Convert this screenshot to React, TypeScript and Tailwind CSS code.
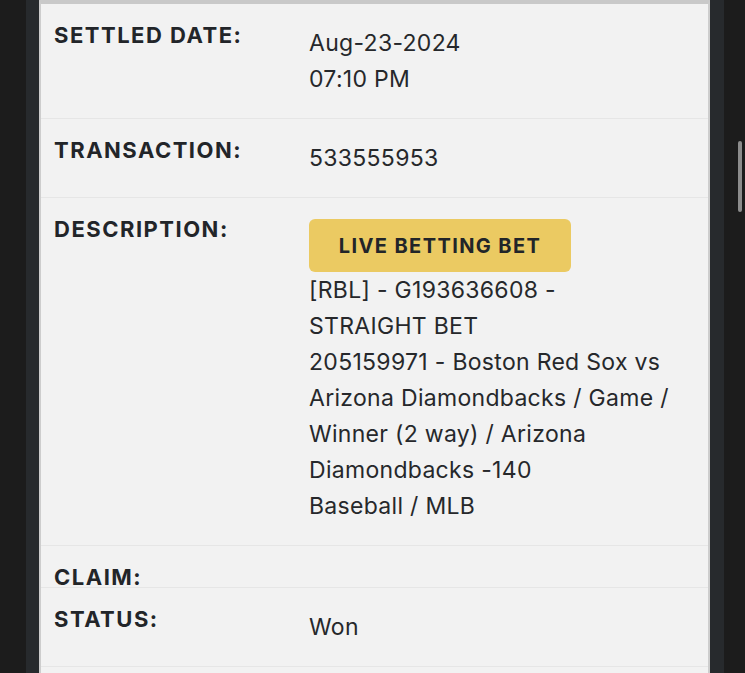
import React from "react";

const font = { fontFamily: "Inter, 'Noto Sans', sans-serif" };

function Row({
  label,
  children,
  noPad,
}: {
  label: string;
  children?: React.ReactNode;
  noPad?: boolean;
}) {
  return (
    <div className={`flex pl-[13px] pt-[21px] ${noPad ? "pb-0" : "pb-[21px]"} border-b border-[#e6e6e6]`}>
      <div className="w-[255px] shrink-0 text-[22px] leading-[20px] font-bold text-[#222529] tracking-[1.5px]">
        {label}
      </div>
      <div className="flex-1 text-[23px] leading-[36px] tracking-[0.3px] text-[#26282b]">{children}</div>
    </div>
  );
}

export default function App() {
  return (
    <div className="relative flex h-[673px] w-[745px] overflow-hidden bg-[#1c1c1c]" style={font}>
      <div className="w-[26px] shrink-0" />
      <div className="w-[13px] shrink-0 bg-[#272a2d]" />
      <div className="w-[671px] shrink-0 border-x-2 border-[#cdcdcd] border-t-4 border-t-[#c9c9c9] bg-[#f2f2f2]">
        <Row label="SETTLED DATE:">
          <div>Aug-23-2024</div>
          <div>07:10 PM</div>
        </Row>
        <Row label="TRANSACTION:">533555953</Row>
        <Row label="DESCRIPTION:">
          <div className="flex h-[53px] w-[262px] items-center justify-center rounded-md bg-[#ebca62] text-[20px] font-bold tracking-[1.4px] text-[#222529]">
            LIVE BETTING BET
          </div>
          <div>[RBL] - G193636608 -</div>
          <div>STRAIGHT BET</div>
          <div>205159971 - Boston Red Sox vs</div>
          <div>Arizona Diamondbacks / Game /</div>
          <div>Winner (2 way) / Arizona</div>
          <div>Diamondbacks -140</div>
          <div>Baseball / MLB</div>
        </Row>
        <Row label="CLAIM:" noPad />
        <Row label="STATUS:">Won</Row>
      </div>
      <div className="w-[14px] shrink-0 bg-[#272a2d]" />
      <div className="flex-1" />
      <div className="absolute left-[738px] top-[141px] h-[71px] w-[4px] rounded-full bg-[#8c8c8c]" />
    </div>
  );
}
